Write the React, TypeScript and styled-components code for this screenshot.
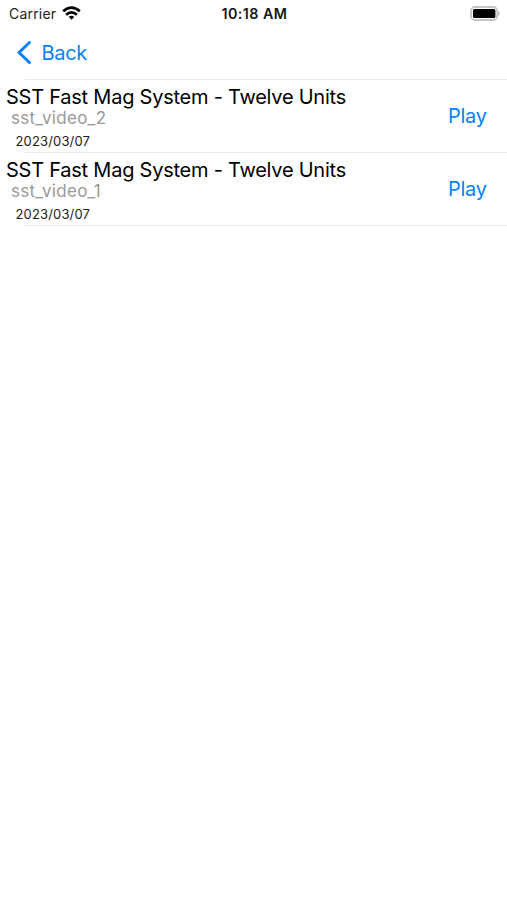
import React from "react";
import styled, { createGlobalStyle } from "styled-components";

const Global = createGlobalStyle`
  * { box-sizing: border-box; }
  body { margin: 0; background: #fff; font-family: Inter, sans-serif; color: #000; }
  button { border: 0; background: none; padding: 0; font: inherit; color: #087ffb; }
`;
const Screen = styled.main`width: 507px; height: 900px; overflow: hidden; background: #fff;`;
const StatusBar = styled.header`
  height: 27px; display: grid; grid-template-columns: 1fr auto 1fr; align-items: center; padding: 0 7px 0 9px;
`;
const Carrier = styled.div`
  display: flex; align-items: center; gap: 5.5px; font-size: 14px; line-height: 27px; letter-spacing: 0.2px; color: #222;
`;
const WifiIcon = styled.svg`display: block; margin-top: -2px;`;
const Clock = styled.div`
  font-size: 14.3px; font-weight: 600; line-height: 27px; letter-spacing: 0.45px; color: #151515;
`;
const Battery = styled.svg`justify-self: end;`;
const NavBar = styled.nav`height: 51.5px; display: flex; align-items: center; padding-left: 16.5px;`;
const BackButton = styled.button`display: flex; align-items: center; gap: 10px;`;
const Label = styled.span<{ $width: number }>`
  display: block; width: ${p => p.$width}px; white-space: nowrap; font-size: 20px; line-height: 24px;
  letter-spacing: -0.3px; text-align: left;
`;
const List = styled.ul`list-style: none; margin: 0; padding: 0;`;
const Row = styled.li`
  height: 73.2px; display: flex; justify-content: space-between; padding-right: 20px;
`;
const Details = styled.div`display: flex; flex-direction: column; padding: 7px 0 0 6px;`;
const Title = styled.div`font-size: 20px; line-height: 23px; letter-spacing: -0.24px; white-space: nowrap;`;
const FileName = styled.div`
  font-size: 17px; line-height: 18px; letter-spacing: 0.28px; color: #999; padding-left: 5px;
`;
const DateText = styled.time`
  font-size: 13px; line-height: 18px; letter-spacing: 0.16px; margin-top: 5px; padding-left: 9.5px; color: #202020;
`;
const PlayButton = styled.button`align-self: center; padding-top: 2px;`;
const Divider = styled.div`height: 1.5px; margin: 0 0 -1.5px 25px; background: #ebebeb;`;

const videos = [
  { title: "SST Fast Mag System - Twelve Units", file: "sst_video_2", date: "2023/03/07" },
  { title: "SST Fast Mag System - Twelve Units", file: "sst_video_1", date: "2023/03/07" },
];

export default function App() {
  return (
    <Screen>
      <Global />
      <StatusBar>
        <Carrier>Carrier
          <WifiIcon width="19" height="14" viewBox="0 0 19 14" fill="none" stroke="#000" strokeWidth="2.7">
            <path d="M1.2 5.2Q9.5-2 17.8 5.2M4.1 8.7Q9.5 4.1 14.9 8.7" />
            <path d="M6.7 10.8Q9.5 8.6 12.3 10.8L9.5 13.7Z" fill="#000" stroke="none" />
          </WifiIcon>
        </Carrier>
        <Clock>10:18 AM</Clock>
        <Battery width="30" height="15" viewBox="0 0 30 15">
          <rect x="1" y="1" width="26.2" height="13" rx="4" fill="none" stroke="#c5c5c5" strokeWidth="1.8" />
          <rect x="3" y="3" width="22.4" height="9" rx="1.5" /><path d="M28.2 5Q31 7.5 28.2 10Z" fill="#b5b5b5" />
        </Battery>
      </StatusBar>
      <NavBar><BackButton>
        <svg width="15" height="24" viewBox="0 0 15 24" fill="none" stroke="currentColor" strokeWidth="3" strokeLinecap="round" strokeLinejoin="round"><path d="M12.5 1.5L2 11.5L12.5 21.5" /></svg>
        <Label $width={46}>Back</Label>
      </BackButton></NavBar>
      <List>
        {videos.map(v => (
          <React.Fragment key={v.file}>
            <Divider />
            <Row><Details><Title>{v.title}</Title><FileName>{v.file}</FileName><DateText>{v.date}</DateText></Details>
              <PlayButton><Label $width={39}>Play</Label></PlayButton></Row>
          </React.Fragment>
        ))}
        <Divider />
      </List>
    </Screen>
  );
}
